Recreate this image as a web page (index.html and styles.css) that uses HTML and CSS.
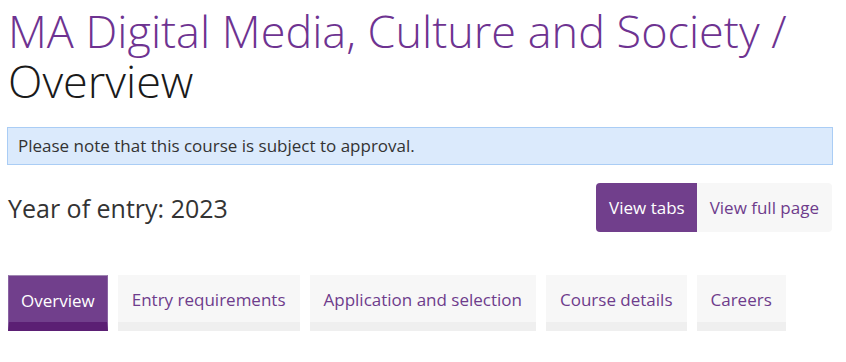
FILE: index.html
```html
<!DOCTYPE html>
<html lang="en">
<head>
  <meta charset="UTF-8">
  <title>MA Digital Media, Culture and Society - Overview</title>
  <link rel="stylesheet" href="styles.css">
</head>
<body>
  <div class="page">
    <h1 class="course-title">
      <span class="course-name">MA Digital Media, Culture and Society /</span>
      <span class="section-name">Overview</span>
    </h1>

    <!-- approval notice -->
    <div class="notice">Please note that this course is subject to approval.</div>

    <div class="entry-row">
      <h2 class="entry-year">Year of entry: 2023</h2>
      <div class="view-toggle">
        <a class="toggle-btn active" href="#">View tabs</a>
        <a class="toggle-btn" href="#">View full page</a>
      </div>
    </div>

    <!-- course tabs -->
    <ul class="tabs">
      <li><a class="tab active" href="#">Overview</a></li>
      <li><a class="tab" href="#">Entry requirements</a></li>
      <li><a class="tab" href="#">Application and selection</a></li>
      <li><a class="tab" href="#">Course details</a></li>
      <li><a class="tab" href="#">Careers</a></li>
    </ul>
  </div>
</body>
</html>
```

FILE: styles.css
```css
body {
  margin: 0;
  padding: 0;
  background: #fff;
  font-family: 'Open Sans', 'Noto Sans', sans-serif;
  color: #333;
}

.page {
  padding: 6px 8px 0;
}

.course-title {
  margin: 0;
  font-size: 45px;
  font-weight: 300;
  line-height: 50px;
}

.course-name {
  display: block;
  color: #6e3391;
}

.section-name {
  display: block;
  color: #1a1a1a;
}

.notice {
  margin: 21px 0 0 -1px;
  width: 804px;
  padding: 7px 10px;
  background: #dbeafc;
  border: 1px solid #aacdf5;
  font-size: 17px;
  line-height: 22px;
  color: #333;
}

.entry-row {
  display: flex;
  justify-content: space-between;
  align-items: center;
  margin-top: 18px;
  width: 824px;
}

.entry-year {
  margin: 0;
  font-size: 25px;
  font-weight: 400;
  color: #333;
}

.view-toggle {
  display: flex;
  border-radius: 4px;
  overflow: hidden;
}

.toggle-btn {
  display: block;
  padding: 0 13px;
  height: 49px;
  line-height: 49px;
  font-size: 17px;
  text-decoration: none;
  color: #6e3c8c;
  background: #f7f7f7;
}

.toggle-btn.active {
  padding: 0 12px 0 13px;
  background: #713f8c;
  color: #fff;
}

.tabs {
  display: flex;
  gap: 10px;
  list-style: none;
  margin: 43px 0 0;
  padding: 0;
}

.tab {
  display: block;
  padding: 0 14px;
  height: 47px;
  line-height: 50px;
  font-size: 17px;
  text-decoration: none;
  color: #6e3c8c;
  background: #f7f7f7;
  border-bottom: 9px solid #efefef;
}

.tab.active {
  padding: 0 12px;
  background: #713f8c;
  color: #fff;
  border: 1px solid #8a63a3;
  border-top-color: #a088b2;
  border-bottom: 9px solid #5b1f74;
  height: 46px;
}
```
